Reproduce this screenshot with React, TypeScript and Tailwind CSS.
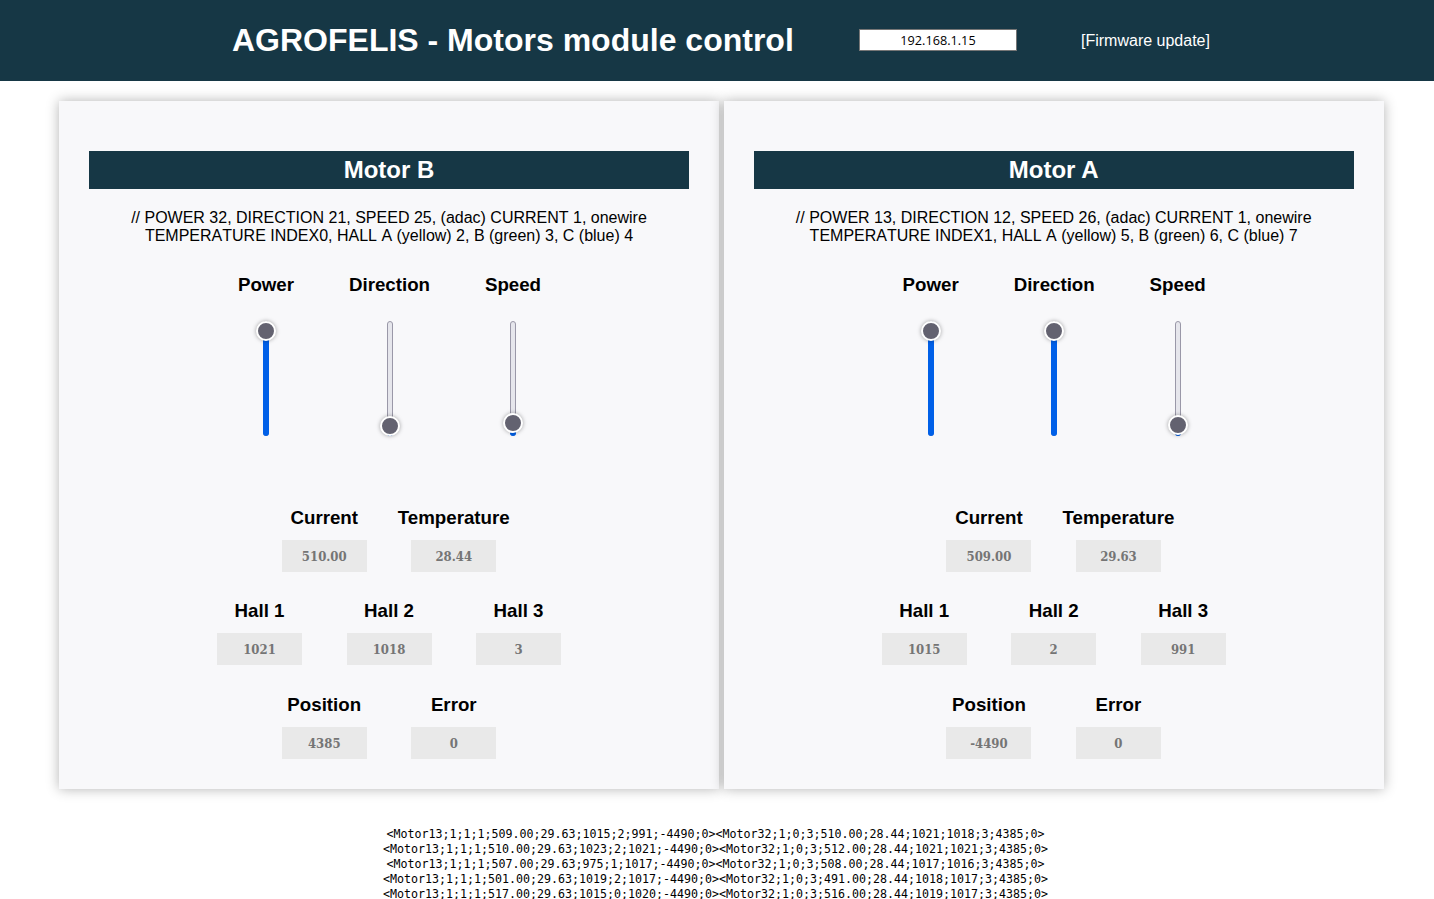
const sans = "font-['Liberation_Sans',Arial,sans-serif]";

type Motor = {
  name: string;
  pins: string;
  sliders: { label: string; thumb: number; }[];
  current: string;
  temperature: string;
  halls: string[];
  position: string;
  error: string;
};

const motors: Motor[] = [
  {
    name: "Motor B",
    pins: "// POWER 32, DIRECTION 21, SPEED 25, (adac) CURRENT 1, onewire TEMPERATURE INDEX0, HALL A (yellow) 2, B (green) 3, C (blue) 4",
    sliders: [
      { label: "Power", thumb: 10 },
      { label: "Direction", thumb: 105 },
      { label: "Speed", thumb: 102 },
    ],
    current: "510.00",
    temperature: "28.44",
    halls: ["1021", "1018", "3"],
    position: "4385",
    error: "0",
  },
  {
    name: "Motor A",
    pins: "// POWER 13, DIRECTION 12, SPEED 26, (adac) CURRENT 1, onewire TEMPERATURE INDEX1, HALL A (yellow) 5, B (green) 6, C (blue) 7",
    sliders: [
      { label: "Power", thumb: 10 },
      { label: "Direction", thumb: 10 },
      { label: "Speed", thumb: 104 },
    ],
    current: "509.00",
    temperature: "29.63",
    halls: ["1015", "2", "991"],
    position: "-4490",
    error: "0",
  },
];

const log = [
  "<Motor13;1;1;1;509.00;29.63;1015;2;991;-4490;0><Motor32;1;0;3;510.00;28.44;1021;1018;3;4385;0>",
  "<Motor13;1;1;1;510.00;29.63;1023;2;1021;-4490;0><Motor32;1;0;3;512.00;28.44;1021;1021;3;4385;0>",
  "<Motor13;1;1;1;507.00;29.63;975;1;1017;-4490;0><Motor32;1;0;3;508.00;28.44;1017;1016;3;4385;0>",
  "<Motor13;1;1;1;501.00;29.63;1019;2;1017;-4490;0><Motor32;1;0;3;491.00;28.44;1018;1017;3;4385;0>",
  "<Motor13;1;1;1;517.00;29.63;1015;0;1020;-4490;0><Motor32;1;0;3;516.00;28.44;1019;1017;3;4385;0>",
];

function Slider({ label, thumb }: { label: string; thumb: number }) {
  return (
    <div className="flex w-[123.5px] flex-col items-center">
      <div className="h-[21px] whitespace-nowrap text-[18.72px] leading-[21px] font-bold text-black">{label}</div>
      <div className="relative mt-[26px] h-[115px] w-[6px] rounded-full border border-[#9a98a8] bg-[#e6e6ec]">
        {/* blue fill runs from the thumb to the bottom of the track */}
        <div
          className="absolute -inset-x-px -bottom-px rounded-full bg-[#0060e8]"
          style={{ height: 115 - thumb }}
        />
        <div
          className="absolute left-1/2 h-[20px] w-[20px] -translate-x-1/2 -translate-y-1/2 rounded-full border-2 border-white bg-[#636270] shadow-[0_0_4px_rgba(0,0,0,0.35)]"
          style={{ top: thumb - 1 }}
        />
      </div>
    </div>
  );
}

function Reading({ label, value }: { label: string; value: string }) {
  return (
    <div className="flex w-[85px] flex-col items-center">
      <div className="h-[21px] whitespace-nowrap text-[18.72px] leading-[21px] font-bold text-black">{label}</div>
      <div className="mt-[12px] flex h-[32px] w-[85px] items-center justify-center bg-[#e9e9e9] pt-[2px] font-['DejaVu_Serif',serif] text-[13px] font-bold font-stretch-condensed text-[#757575]">
        {value}
      </div>
    </div>
  );
}

function MotorPanel({ motor }: { motor: Motor }) {
  return (
    <section className="flex w-[660px] flex-col bg-[#f8f8fa] px-[30px] pt-[50px] pb-[30px] shadow-[0_0_12px_rgba(0,0,0,0.3)]">
      <h2 className="h-[38px] bg-[#163745] text-center text-[24px] leading-[38px] font-bold text-white">{motor.name}</h2>
      <p className="mt-[20px] text-center text-[16px] leading-[18px] text-black [font-kerning:none]">{motor.pins}</p>
      <div className="mt-[29px] flex justify-center pl-[1px]">
        {motor.sliders.map((s) => (
          <Slider key={s.label} label={s.label} thumb={s.thumb} />
        ))}
      </div>
      <div className="mt-[71px] flex justify-center gap-[44.5px]">
        <Reading label="Current" value={motor.current} />
        <Reading label="Temperature" value={motor.temperature} />
      </div>
      <div className="mt-[28px] flex justify-center gap-[44.5px]">
        {motor.halls.map((h, i) => (
          <Reading key={i} label={`Hall ${i + 1}`} value={h} />
        ))}
      </div>
      <div className="mt-[29px] flex justify-center gap-[44.5px]">
        <Reading label="Position" value={motor.position} />
        <Reading label="Error" value={motor.error} />
      </div>
    </section>
  );
}

export default function App() {
  return (
    <div className={`min-h-screen bg-white ${sans}`}>
      <header className="flex h-[81px] items-center bg-[#163745] pl-[232px] text-white">
        <h1 className="mb-[2px] w-[627px] text-[32px] leading-[38px] font-bold">AGROFELIS - Motors module control</h1>
        <input
          readOnly
          value="192.168.1.15"
          className="mb-[2px] h-[22px] w-[158px] border border-[#767676] bg-white text-center font-['Open_Sans',sans-serif] text-[12.7px] text-black"
        />
        <a className="ml-[64px] text-[16px]">[Firmware update]</a>
      </header>
      <main className="mt-[20px] flex gap-[4.7px] pl-[59px]">
        {motors.map((m) => (
          <MotorPanel key={m.name} motor={m} />
        ))}
      </main>
      <div className="mt-[38px] pr-[3px] text-center font-['DejaVu_Sans_Mono',monospace] text-[11.63px] leading-[15px] text-black">
        {log.map((l, i) => (
          <div key={i}>{l}</div>
        ))}
      </div>
    </div>
  );
}
